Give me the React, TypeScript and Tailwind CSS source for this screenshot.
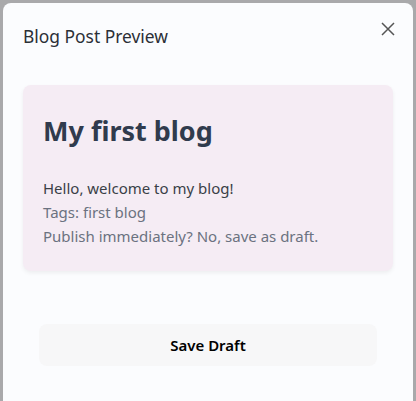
export default function App() {
  return (
    <div
      className="h-[401px] w-[416px] overflow-hidden bg-[#a9a9ab] px-[3px] pt-[3px]"
      style={{ fontFamily: '"Noto Sans", "Open Sans", sans-serif' }}
    >
      <div className="relative h-[420px] rounded-lg bg-[#fbfcfe] px-5">
        <button className="absolute right-[14px] top-[15px] p-1 text-[#555]">
          <svg width="14" height="14" viewBox="0 0 14 14" fill="none" stroke="currentColor" strokeWidth="1.5">
            <path d="M1 1L13 13M13 1L1 13" />
          </svg>
        </button>
        {/* Header */}
        <h2 className="pt-[21px] text-[17.4px] leading-6 text-[#2b2f36]">Blog Post Preview</h2>

        {/* Preview card */}
        <div className="mt-[37px] rounded-lg bg-[#f5ecf4] px-5 pt-[28px] pb-[23px] shadow-[0_2px_4px_rgba(0,0,0,0.06)]">
          <h1 className="text-[27px] font-bold leading-9 text-[#303b4d]">My first blog</h1>
          <div className="mt-[27px] text-[15px] leading-6">
            <p className="text-[#3a3f47]">Hello, welcome to my blog!</p>
            <p className="text-[#6b7280]">Tags: first blog</p>
            <p className="text-[#6b7280]">Publish immediately? No, save as draft.</p>
          </div>
        </div>

        {/* Action */}
        <div className="mt-[53px] px-4">
          <button className="h-[42px] w-full rounded-lg bg-[#f7f7f8] text-[15px] font-semibold text-black">
            Save Draft
          </button>
        </div>
      </div>
    </div>
  );
}
